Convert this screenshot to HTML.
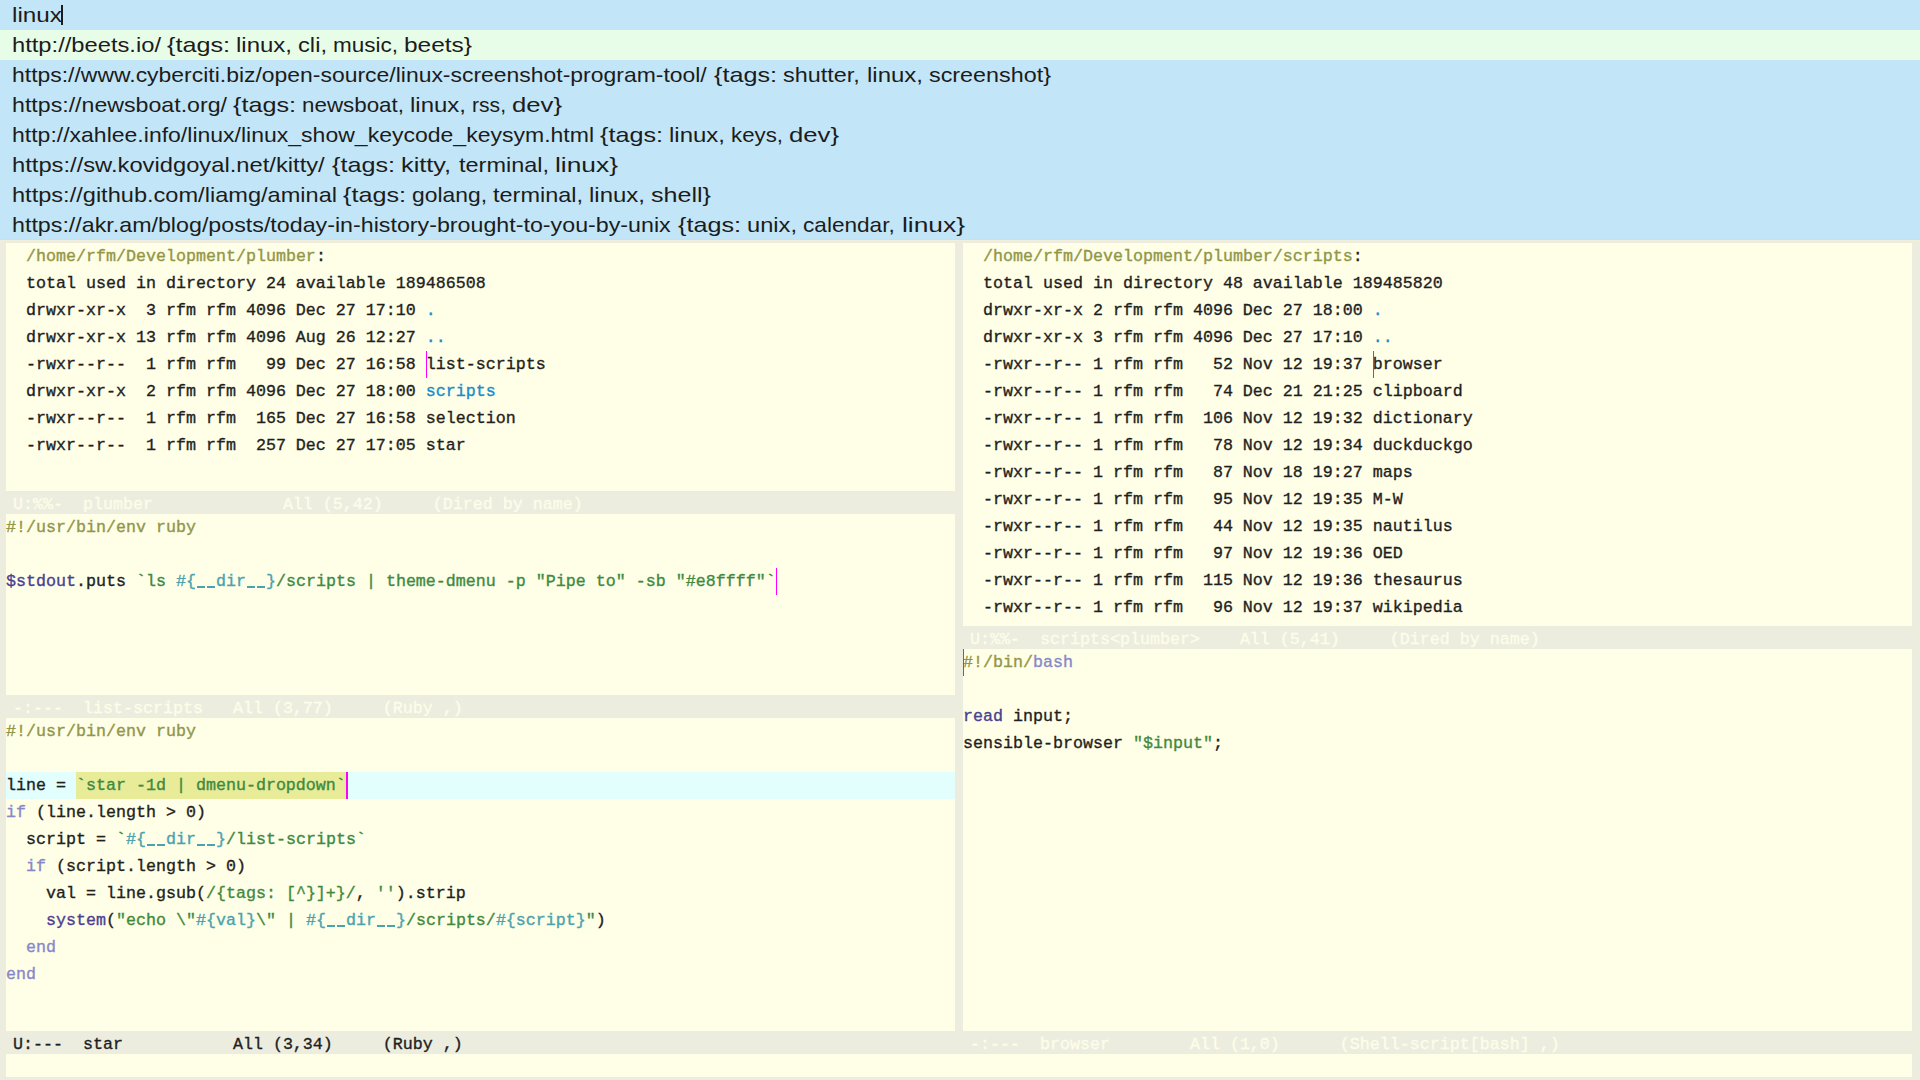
<!DOCTYPE html>
<html><head><meta charset="utf-8"><title>emacs</title><style>
html,body{margin:0;padding:0;}
body{width:1920px;height:1080px;position:relative;overflow:hidden;background:#ededdf;}
.m{position:absolute;white-space:pre;font-family:"Liberation Mono",monospace;font-size:16.6667px;line-height:27px;height:27px;color:#1f1f1f;-webkit-text-stroke:0.35px currentColor;}
.u{-webkit-text-fill-color:transparent;-webkit-text-stroke:0;background:linear-gradient(currentColor,currentColor) no-repeat;background-size:8px 2px;background-position:1px 14px;}
.d{position:absolute;white-space:pre;font-family:"Liberation Sans",sans-serif;font-size:21px;transform-origin:0 0;line-height:30px;height:30px;color:#1c1c1c;}
</style></head>
<body>
<div style="position:absolute;left:6px;top:243px;width:949px;height:248px;background:#ffffe8;"></div>
<div style="position:absolute;left:6px;top:514px;width:949px;height:181px;background:#ffffe8;"></div>
<div style="position:absolute;left:6px;top:718px;width:949px;height:313px;background:#ffffe8;"></div>
<div style="position:absolute;left:963px;top:243px;width:949px;height:383px;background:#ffffe8;"></div>
<div style="position:absolute;left:963px;top:649px;width:949px;height:382px;background:#ffffe8;"></div>
<div style="position:absolute;left:6px;top:1054px;width:1906px;height:23px;background:#ffffe8;"></div>
<div class="m" style="left:6px;top:243px"><span style="color:#1f1f1f;">  </span><span style="color:#929647;">/home/rfm/Development/plumber</span><span style="color:#1f1f1f;">:</span></div>
<div class="m" style="left:6px;top:270px">  total used in directory 24 available 189486508</div>
<div class="m" style="left:6px;top:297px">  drwxr-xr-x  3 rfm rfm 4096 Dec 27 17:10 <span style="color:#1a8ccc;">.</span></div>
<div class="m" style="left:6px;top:324px">  drwxr-xr-x 13 rfm rfm 4096 Aug 26 12:27 <span style="color:#1a8ccc;">..</span></div>
<div class="m" style="left:6px;top:351px">  -rwxr--r--  1 rfm rfm   99 Dec 27 16:58 list-scripts</div>
<div class="m" style="left:6px;top:378px">  drwxr-xr-x  2 rfm rfm 4096 Dec 27 18:00 <span style="color:#1a8ccc;">scripts</span></div>
<div class="m" style="left:6px;top:405px">  -rwxr--r--  1 rfm rfm  165 Dec 27 16:58 selection</div>
<div class="m" style="left:6px;top:432px">  -rwxr--r--  1 rfm rfm  257 Dec 27 17:05 star</div>
<div style="position:absolute;left:426px;top:351px;width:1px;height:27px;background:#ff00ff;"></div>
<div class="m" style="left:6px;top:514px"><span style="color:#929647;">#!/usr/bin/env ruby</span></div>
<div class="m" style="left:6px;top:541px"></div>
<div class="m" style="left:6px;top:568px"><span style="color:#4b3f91;">$stdout</span>.puts <span style="color:#3f8a3f;">`ls </span><span style="color:#4aa3ad;">#{<span class="u">_</span><span class="u">_</span>dir<span class="u">_</span><span class="u">_</span>}</span><span style="color:#3f8a3f;">/scripts | theme-dmenu -p &quot;Pipe to&quot; -sb &quot;#e8ffff&quot;`</span></div>
<div style="position:absolute;left:776.0px;top:568px;width:1px;height:27px;background:#ff00ff;"></div>
<div style="position:absolute;left:6px;top:772px;width:949px;height:27px;background:#e2fefd;"></div>
<div style="position:absolute;left:76.0px;top:772px;width:270.0px;height:27px;background:#e8eb98;"></div>
<div class="m" style="left:6px;top:718px"><span style="color:#929647;">#!/usr/bin/env ruby</span></div>
<div class="m" style="left:6px;top:745px"></div>
<div class="m" style="left:6px;top:772px">line = <span style="color:#3f8a3f;">`star -1d | dmenu-dropdown`</span></div>
<div class="m" style="left:6px;top:799px"><span style="color:#8888c8;">if</span> (line.length &gt; 0)</div>
<div class="m" style="left:6px;top:826px">  script = <span style="color:#3f8a3f;">`</span><span style="color:#4aa3ad;">#{<span class="u">_</span><span class="u">_</span>dir<span class="u">_</span><span class="u">_</span>}</span><span style="color:#3f8a3f;">/list-scripts`</span></div>
<div class="m" style="left:6px;top:853px">  <span style="color:#8888c8;">if</span> (script.length &gt; 0)</div>
<div class="m" style="left:6px;top:880px">    val = line.gsub(<span style="color:#3f8a3f;">/{tags: [^}]+}/</span>, <span style="color:#3f8a3f;">&#x27;&#x27;</span>).strip</div>
<div class="m" style="left:6px;top:907px">    <span style="color:#4b3f91;">system</span>(<span style="color:#3f8a3f;">&quot;echo \&quot;</span><span style="color:#4aa3ad;">#{val}</span><span style="color:#3f8a3f;">\&quot; | </span><span style="color:#4aa3ad;">#{<span class="u">_</span><span class="u">_</span>dir<span class="u">_</span><span class="u">_</span>}</span><span style="color:#3f8a3f;">/scripts/</span><span style="color:#4aa3ad;">#{script}</span><span style="color:#3f8a3f;">&quot;</span>)</div>
<div class="m" style="left:6px;top:934px">  <span style="color:#8888c8;">end</span></div>
<div class="m" style="left:6px;top:961px"><span style="color:#8888c8;">end</span></div>
<div style="position:absolute;left:346.0px;top:772px;width:2px;height:27px;background:#ff00ff;"></div>
<div class="m" style="left:963px;top:243px"><span style="color:#1f1f1f;">  </span><span style="color:#929647;">/home/rfm/Development/plumber/scripts</span><span style="color:#1f1f1f;">:</span></div>
<div class="m" style="left:963px;top:270px">  total used in directory 48 available 189485820</div>
<div class="m" style="left:963px;top:297px">  drwxr-xr-x 2 rfm rfm 4096 Dec 27 18:00 <span style="color:#1a8ccc;">.</span></div>
<div class="m" style="left:963px;top:324px">  drwxr-xr-x 3 rfm rfm 4096 Dec 27 17:10 <span style="color:#1a8ccc;">..</span></div>
<div class="m" style="left:963px;top:351px">  -rwxr--r-- 1 rfm rfm   52 Nov 12 19:37 browser</div>
<div class="m" style="left:963px;top:378px">  -rwxr--r-- 1 rfm rfm   74 Dec 21 21:25 clipboard</div>
<div class="m" style="left:963px;top:405px">  -rwxr--r-- 1 rfm rfm  106 Nov 12 19:32 dictionary</div>
<div class="m" style="left:963px;top:432px">  -rwxr--r-- 1 rfm rfm   78 Nov 12 19:34 duckduckgo</div>
<div class="m" style="left:963px;top:459px">  -rwxr--r-- 1 rfm rfm   87 Nov 18 19:27 maps</div>
<div class="m" style="left:963px;top:486px">  -rwxr--r-- 1 rfm rfm   95 Nov 12 19:35 M-W</div>
<div class="m" style="left:963px;top:513px">  -rwxr--r-- 1 rfm rfm   44 Nov 12 19:35 nautilus</div>
<div class="m" style="left:963px;top:540px">  -rwxr--r-- 1 rfm rfm   97 Nov 12 19:36 OED</div>
<div class="m" style="left:963px;top:567px">  -rwxr--r-- 1 rfm rfm  115 Nov 12 19:36 thesaurus</div>
<div class="m" style="left:963px;top:594px">  -rwxr--r-- 1 rfm rfm   96 Nov 12 19:37 wikipedia</div>
<div style="position:absolute;left:1373.0px;top:351px;width:1px;height:27px;background:#ff00ff;"></div>
<div class="m" style="left:963px;top:649px"><span style="color:#929647;">#!/bin/</span><span style="color:#8888c8;">bash</span></div>
<div class="m" style="left:963px;top:676px"></div>
<div class="m" style="left:963px;top:703px"><span style="color:#4b3f91;">read</span> input;</div>
<div class="m" style="left:963px;top:730px">sensible-browser <span style="color:#3f8a3f;">&quot;$input&quot;</span>;</div>
<div style="position:absolute;left:963px;top:649px;width:1px;height:27px;background:#ff00ff;"></div>
<div class="m" style="left:13px;top:491px;color:#fdfde9">U:%%-  plumber             All (5,42)     (Dired by name)</div>
<div class="m" style="left:13px;top:695px;color:#fdfde9">-:---  list-scripts   All (3,77)     (Ruby ,)</div>
<div class="m" style="left:13px;top:1031px;color:#1f1f1f">U:---  star           All (3,34)     (Ruby ,)</div>
<div class="m" style="left:970px;top:626px;color:#fdfde9">U:%%-  scripts&lt;plumber&gt;    All (5,41)     (Dired by name)</div>
<div class="m" style="left:970px;top:1031px;color:#fdfde9">-:---  browser        All (1,0)      (Shell-script[bash] ,)</div>
<div style="position:absolute;left:0px;top:0px;width:1920px;height:240px;background:#c2e6f7;"></div>
<div style="position:absolute;left:0px;top:30px;width:1920px;height:30px;background:#e8fde8;"></div>
<div class="d" style="top:0px;left:12.00px;transform:scaleX(1.1577)">linux</div>
<div class="d" style="top:30px;left:12.00px;transform:scaleX(1.1295)">http://beets.io/</div>
<div class="d" style="top:30px;left:167.00px;transform:scaleX(1.1991)">{tags:</div>
<div class="d" style="top:30px;left:236.00px;transform:scaleX(1.1423)">linux,</div>
<div class="d" style="top:30px;left:298.00px;transform:scaleX(1.1299)">cli,</div>
<div class="d" style="top:30px;left:333.00px;transform:scaleX(1.0713)">music,</div>
<div class="d" style="top:30px;left:404.00px;transform:scaleX(1.1647)">beets}</div>
<div class="d" style="top:60px;left:12.00px;transform:scaleX(1.0922)">https://www.cyberciti.biz/open-source/linux-screenshot-program-tool/</div>
<div class="d" style="top:60px;left:714.00px;transform:scaleX(1.1991)">{tags:</div>
<div class="d" style="top:60px;left:783.00px;transform:scaleX(1.1137)">shutter,</div>
<div class="d" style="top:60px;left:867.00px;transform:scaleX(1.1423)">linux,</div>
<div class="d" style="top:60px;left:929.00px;transform:scaleX(1.1117)">screenshot}</div>
<div class="d" style="top:90px;left:12.00px;transform:scaleX(1.1029)">https://newsboat.org/</div>
<div class="d" style="top:90px;left:233.00px;transform:scaleX(1.1991)">{tags:</div>
<div class="d" style="top:90px;left:302.00px;transform:scaleX(1.0655)">newsboat,</div>
<div class="d" style="top:90px;left:410.00px;transform:scaleX(1.1423)">linux,</div>
<div class="d" style="top:90px;left:472.00px;transform:scaleX(1.0051)">rss,</div>
<div class="d" style="top:90px;left:512.00px;transform:scaleX(1.2233)">dev}</div>
<div class="d" style="top:120px;left:12.00px;transform:scaleX(1.0958)">http://xahlee.info/linux/linux_show_keycode_keysym.html</div>
<div class="d" style="top:120px;left:600.00px;transform:scaleX(1.1991)">{tags:</div>
<div class="d" style="top:120px;left:669.00px;transform:scaleX(1.1423)">linux,</div>
<div class="d" style="top:120px;left:731.00px;transform:scaleX(1.0609)">keys,</div>
<div class="d" style="top:120px;left:789.00px;transform:scaleX(1.2233)">dev}</div>
<div class="d" style="top:150px;left:12.00px;transform:scaleX(1.1304)">https://sw.kovidgoyal.net/kitty/</div>
<div class="d" style="top:150px;left:332.00px;transform:scaleX(1.1991)">{tags:</div>
<div class="d" style="top:150px;left:401.00px;transform:scaleX(1.2046)">kitty,</div>
<div class="d" style="top:150px;left:459.00px;transform:scaleX(1.1177)">terminal,</div>
<div class="d" style="top:150px;left:555.00px;transform:scaleX(1.2549)">linux}</div>
<div class="d" style="top:180px;left:12.00px;transform:scaleX(1.1228)">https://github.com/liamg/aminal</div>
<div class="d" style="top:180px;left:343.00px;transform:scaleX(1.1991)">{tags:</div>
<div class="d" style="top:180px;left:412.00px;transform:scaleX(1.0886)">golang,</div>
<div class="d" style="top:180px;left:493.00px;transform:scaleX(1.1177)">terminal,</div>
<div class="d" style="top:180px;left:589.00px;transform:scaleX(1.1423)">linux,</div>
<div class="d" style="top:180px;left:651.00px;transform:scaleX(1.1951)">shell}</div>
<div class="d" style="top:210px;left:12.00px;transform:scaleX(1.1066)">https://akr.am/blog/posts/today-in-history-brought-to-you-by-unix</div>
<div class="d" style="top:210px;left:678.00px;transform:scaleX(1.1991)">{tags:</div>
<div class="d" style="top:210px;left:747.00px;transform:scaleX(1.1272)">unix,</div>
<div class="d" style="top:210px;left:803.00px;transform:scaleX(1.0765)">calendar,</div>
<div class="d" style="top:210px;left:902.00px;transform:scaleX(1.2549)">linux}</div>
<div style="position:absolute;left:61px;top:5px;width:2px;height:20px;background:#1c1c1c;"></div>
<div style="position:absolute;left:0px;top:239px;width:1920px;height:1px;background:#bde4f8;"></div>
<div style="position:absolute;left:0px;top:240px;width:1920px;height:1px;background:#f2eedc;"></div>
</body></html>
